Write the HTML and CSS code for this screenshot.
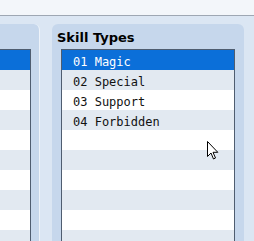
FILE: index.html
```html
<!DOCTYPE html>
<html lang="en">
<head>
    <meta charset="UTF-8">
    <title>Skill Types</title>
    <link rel="stylesheet" href="styles.css">
</head>
<body>
    <div class="toolbar"></div>
    <div class="panels">
        <div class="panel panel-left">
            <ul class="list">
                <li class="selected">&nbsp;</li>
                <li></li><li></li><li></li><li></li><li></li><li></li><li></li><li></li><li></li>
            </ul>
        </div>
        <div class="panel panel-right">
            <div class="panel-title">Skill Types</div>
            <ul class="list">
                <li class="selected">01 Magic</li>
                <li>02 Special</li>
                <li>03 Support</li>
                <li>04 Forbidden</li>
                <li></li><li></li><li></li><li></li><li></li><li></li>
            </ul>
        </div>
    </div>
    <svg class="cursor" width="13" height="20" viewBox="0 0 13 20">
        <path d="M0.5 0.5 L0.5 15.5 L4 12 L6.5 18 L8.5 17 L6 11.3 L10.8 11.3 Z" fill="#fff" stroke="#000" stroke-width="1" stroke-linejoin="miter"/>
    </svg>
</body>
</html>
```

FILE: styles.css
```css
body {
    margin: 0;
    background: #dbe6f3;
    font-family: "DejaVu Sans", sans-serif;
    overflow: hidden;
    height: 241px;
}
.toolbar {
    height: 15px;
    background: #f3f6fa;
    border-bottom: 1px solid #9ea7b3;
}
.panels {
    display: flex;
    gap: 12px;
    padding-top: 8px;
}
.panel {
    background: #c6d7ec;
    height: 217px;
    overflow: hidden;
}
.panel-left {
    width: 40px;
    border-top-right-radius: 6px;
    border-right: 1px solid #eef3fa;
    padding-top: 25px;
    box-sizing: border-box;
}
.panel-left .list {
    width: 31px;
    border-left: none;
}
.panel-right {
    width: 192px;
    border-radius: 6px 6px 0 0;
    padding: 0 9px;
    box-sizing: border-box;
}
.panel-title {
    height: 25px;
    line-height: 27px;
    font-weight: bold;
    font-size: 13px;
    color: #000;
    margin-left: -4px;
}
.list {
    list-style: none;
    margin: 0;
    padding: 0;
    background: #fff;
    border: 1px solid #4f5d70;
    border-bottom: none;
    box-sizing: border-box;
    height: 192px;
    overflow: hidden;
}
.list li {
    height: 18px;
    padding-top: 2px;
    line-height: 20px;
    padding-left: 11px;
    font-family: "DejaVu Sans Mono", monospace;
    font-size: 12px;
    color: #111;
}
.list li:nth-child(even) {
    background: #e2e9f1;
}
.list li.selected {
    background: #0b6fd9;
    color: #fff;
}
.cursor {
    position: absolute;
    left: 207px;
    top: 141px;
}
```
